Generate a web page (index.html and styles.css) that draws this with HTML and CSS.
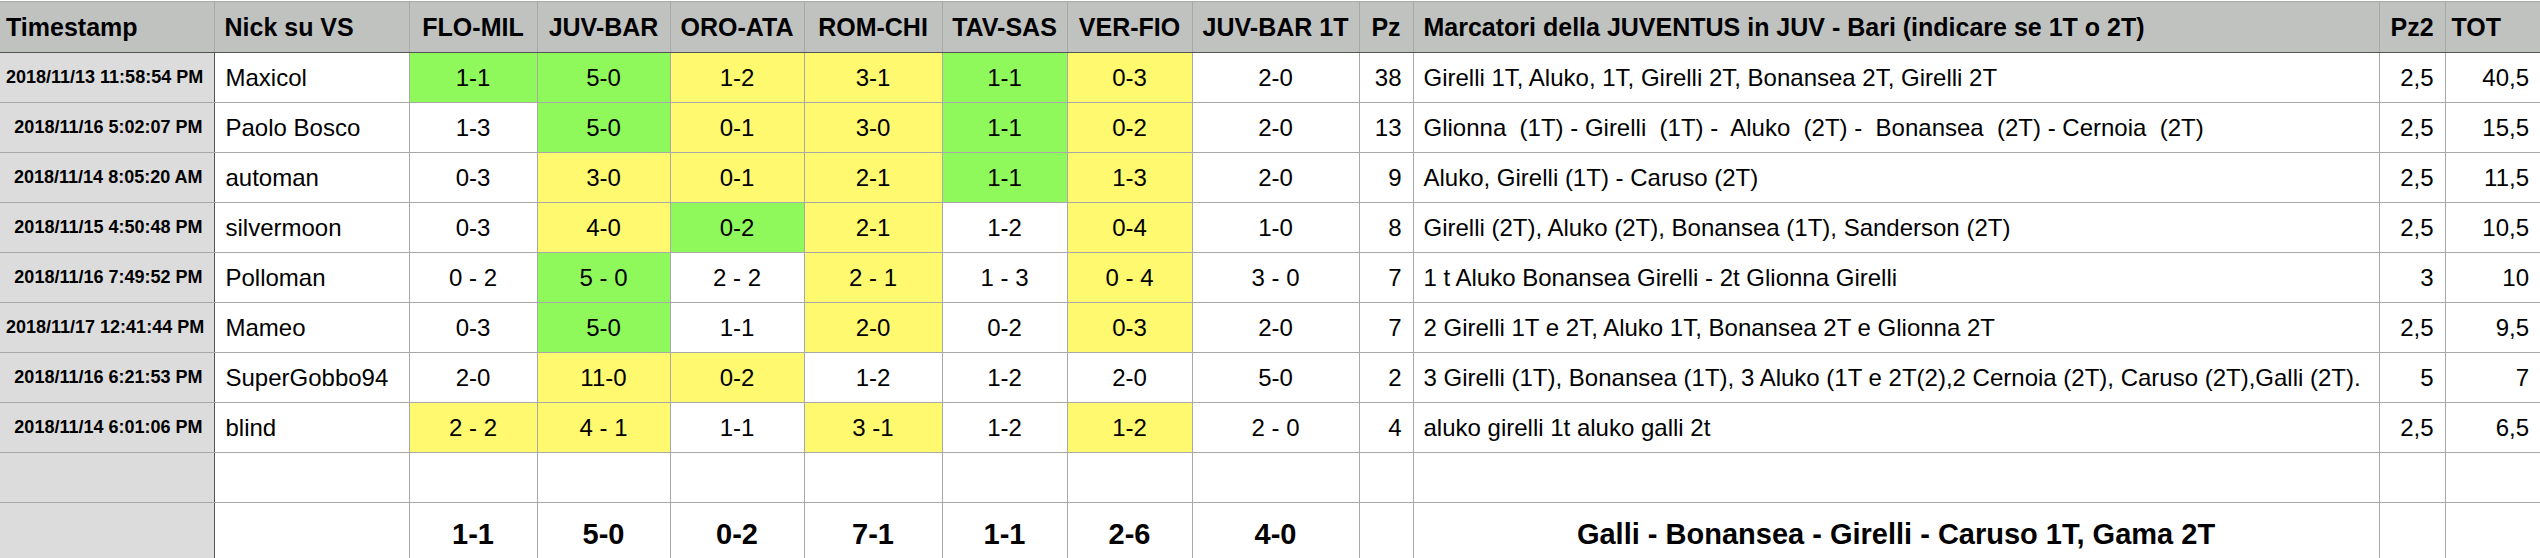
FILE: index.html
```html
<!DOCTYPE html>
<html lang="it">
<head>
<meta charset="utf-8">
<title>Pronostici</title>
<link rel="stylesheet" href="styles.css">
</head>
<body>
<div class="wrap">
<table class="sheet">
<colgroup>
<col class="w-ts"><col class="w-nick"><col class="w-flo"><col class="w-juv"><col class="w-oro"><col class="w-rom"><col class="w-tav"><col class="w-ver"><col class="w-juv1"><col class="w-pz"><col class="w-marc"><col class="w-pz2"><col class="w-tot">
</colgroup>
<thead>
<tr>
<th class="ts">Timestamp</th><th class="nick">Nick su VS</th><th>FLO-MIL</th><th>JUV-BAR</th><th>ORO-ATA</th><th>ROM-CHI</th><th>TAV-SAS</th><th>VER-FIO</th><th>JUV-BAR 1T</th><th>Pz</th><th class="marc">Marcatori della JUVENTUS in JUV - Bari (indicare se 1T o 2T)</th><th>Pz2</th><th class="tot">TOT</th>
</tr>
</thead>
<tbody>
<tr><td class="ts">2018/11/13 11:58:54 PM</td><td class="nick">Maxicol</td><td class="g">1-1</td><td class="g">5-0</td><td class="y">1-2</td><td class="y">3-1</td><td class="g">1-1</td><td class="y">0-3</td><td>2-0</td><td class="num">38</td><td class="marc">Girelli 1T, Aluko, 1T, Girelli 2T, Bonansea 2T, Girelli 2T</td><td class="num">2,5</td><td class="num">40,5</td></tr>
<tr><td class="ts">2018/11/16 5:02:07 PM</td><td class="nick">Paolo Bosco</td><td>1-3</td><td class="g">5-0</td><td class="y">0-1</td><td class="y">3-0</td><td class="g">1-1</td><td class="y">0-2</td><td>2-0</td><td class="num">13</td><td class="marc">Glionna  (1T) - Girelli  (1T) -  Aluko  (2T) -  Bonansea  (2T) - Cernoia  (2T)</td><td class="num">2,5</td><td class="num">15,5</td></tr>
<tr><td class="ts">2018/11/14 8:05:20 AM</td><td class="nick">automan</td><td>0-3</td><td class="y">3-0</td><td class="y">0-1</td><td class="y">2-1</td><td class="g">1-1</td><td class="y">1-3</td><td>2-0</td><td class="num">9</td><td class="marc">Aluko, Girelli (1T) - Caruso (2T)</td><td class="num">2,5</td><td class="num">11,5</td></tr>
<tr><td class="ts">2018/11/15 4:50:48 PM</td><td class="nick">silvermoon</td><td>0-3</td><td class="y">4-0</td><td class="g">0-2</td><td class="y">2-1</td><td>1-2</td><td class="y">0-4</td><td>1-0</td><td class="num">8</td><td class="marc">Girelli (2T), Aluko (2T), Bonansea (1T), Sanderson (2T)</td><td class="num">2,5</td><td class="num">10,5</td></tr>
<tr><td class="ts">2018/11/16 7:49:52 PM</td><td class="nick">Polloman</td><td>0 - 2</td><td class="g">5 - 0</td><td>2 - 2</td><td class="y">2 - 1</td><td>1 - 3</td><td class="y">0 - 4</td><td>3 - 0</td><td class="num">7</td><td class="marc">1 t Aluko Bonansea Girelli - 2t Glionna Girelli</td><td class="num">3</td><td class="num">10</td></tr>
<tr><td class="ts">2018/11/17 12:41:44 PM</td><td class="nick">Mameo</td><td>0-3</td><td class="g">5-0</td><td>1-1</td><td class="y">2-0</td><td>0-2</td><td class="y">0-3</td><td>2-0</td><td class="num">7</td><td class="marc">2 Girelli 1T e 2T, Aluko 1T, Bonansea 2T e Glionna 2T</td><td class="num">2,5</td><td class="num">9,5</td></tr>
<tr><td class="ts">2018/11/16 6:21:53 PM</td><td class="nick">SuperGobbo94</td><td>2-0</td><td class="y">11-0</td><td class="y">0-2</td><td>1-2</td><td>1-2</td><td>2-0</td><td>5-0</td><td class="num">2</td><td class="marc">3 Girelli (1T), Bonansea (1T), 3 Aluko (1T e 2T(2),2 Cernoia (2T), Caruso (2T),Galli (2T).</td><td class="num">5</td><td class="num">7</td></tr>
<tr><td class="ts">2018/11/14 6:01:06 PM</td><td class="nick">blind</td><td class="y">2 - 2</td><td class="y">4 - 1</td><td>1-1</td><td class="y">3 -1</td><td>1-2</td><td class="y">1-2</td><td>2 - 0</td><td class="num">4</td><td class="marc">aluko girelli 1t aluko galli 2t</td><td class="num">2,5</td><td class="num">6,5</td></tr>
<tr><td class="ts"></td><td class="nick"></td><td></td><td></td><td></td><td></td><td></td><td></td><td></td><td class="num"></td><td class="marc"></td><td class="num"></td><td class="num"></td></tr>
<tr class="total"><td class="ts"></td><td class="nick"></td><td>1-1</td><td>5-0</td><td>0-2</td><td>7-1</td><td>1-1</td><td>2-6</td><td>4-0</td><td class="num"></td><td>Galli - Bonansea - Girelli - Caruso 1T, Gama 2T</td><td class="num"></td><td class="num"></td></tr>
</tbody>
</table>
</div>
</body>
</html>
```
FILE: styles.css
```css
html, body {
  margin: 0;
  padding: 0;
  background: #ffffff;
  overflow: hidden;
}

.wrap {
  padding-top: 1px;
}

.sheet {
  border-collapse: collapse;
  table-layout: fixed;
  width: 2540px;
  font-family: "Liberation Sans", Arial, Helvetica, sans-serif;
  font-size: 24px;
  color: #000;
}

.w-ts { width: 214px; }
.w-nick { width: 195px; }
.w-flo { width: 128px; }
.w-juv { width: 133px; }
.w-oro { width: 134px; }
.w-rom { width: 138px; }
.w-tav { width: 125px; }
.w-ver { width: 125px; }
.w-juv1 { width: 167px; }
.w-pz { width: 54px; }
.w-marc { width: 966px; }
.w-pz2 { width: 66px; }
.w-tot { width: 95px; }

.sheet th,
.sheet td {
  border: 1px solid #a8a8a8;
  padding: 0 6px;
  white-space: pre;
  overflow: hidden;
  text-align: center;
  vertical-align: middle;
}

.sheet th {
  background: #c0c2c0;
  font-weight: bold;
  font-size: 25px;
  height: 50px;
  border-bottom: 1px solid #545454;
}

.sheet td {
  height: 49px;
}

.sheet th:first-child,
.sheet td:first-child {
  border-left: none;
}

.sheet th:last-child,
.sheet td:last-child {
  border-right: none;
}

.sheet th.ts,
.sheet th.tot {
  text-align: left;
  padding-left: 6px;
}

.sheet th.nick,
.sheet th.marc {
  text-align: left;
  padding-left: 10px;
}

.sheet td.ts {
  background: #dcdcdc;
  font-weight: bold;
  font-size: 18px;
  text-align: right;
  padding-right: 11px;
  border-right: 1px solid #545454;
}

.sheet td.nick {
  text-align: left;
  padding-left: 11px;
}

.sheet td.marc {
  text-align: left;
  padding-left: 10px;
}

.sheet td.num {
  text-align: right;
  padding-right: 11px;
}

.sheet td.g {
  background: #8ff95c;
}

.sheet td.y {
  background: #fff96f;
}

.sheet tr.total td {
  height: 63px;
  font-weight: bold;
  font-size: 29px;
}
```
